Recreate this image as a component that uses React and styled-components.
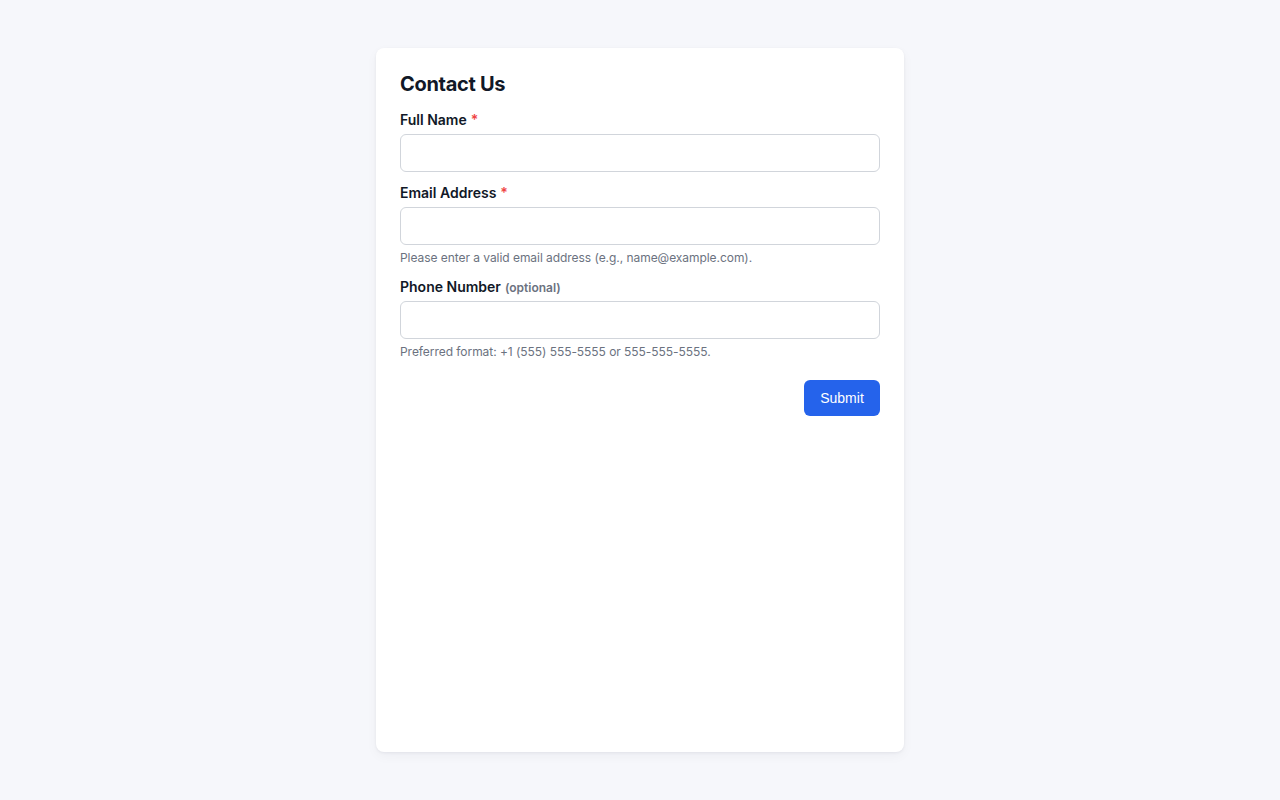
import React from 'react';
import styled, { createGlobalStyle } from 'styled-components';

const GlobalStyle = createGlobalStyle`
  html, body {
    margin: 0;
    padding: 0;
    background: #f6f7fb;
    font-family: Inter, "Noto Sans", "Liberation Sans", sans-serif;
    color: #111827;
  }
  * {
    box-sizing: border-box;
  }
`;

const Page = styled.div`
  min-height: 800px;
  display: flex;
  justify-content: center;
  padding: 48px 0;
`;

const Card = styled.form`
  width: 528px;
  height: 704px;
  background: #ffffff;
  border-radius: 8px;
  box-shadow: 0 1px 3px rgba(15, 23, 42, 0.06), 0 4px 12px rgba(15, 23, 42, 0.04);
  padding: 24px;
  display: flex;
  flex-direction: column;
`;

const Title = styled.h1`
  margin: 0 0 14px;
  font-size: 20px;
  line-height: 24px;
  font-weight: 700;
  letter-spacing: -0.3px;
  color: #111827;
`;

const Field = styled.div`
  display: flex;
  flex-direction: column;
  margin-bottom: 11px;
`;

const Label = styled.label`
  display: block;
  height: 20px;
  font-size: 14px;
  line-height: 20px;
  font-weight: 600;
  color: #111827;
  margin-bottom: 4px;
`;

const Required = styled.span`
  color: #ef4444;
  margin-left: 4px;
`;

const Optional = styled.span`
  color: #6b7280;
  font-size: 12px;
  line-height: 1;
  font-weight: 600;
  margin-left: 4px;
`;

const Input = styled.input`
  height: 38px;
  width: 100%;
  border: 1px solid #d1d5db;
  border-radius: 6px;
  padding: 0 12px;
  font-family: inherit;
  font-size: 14px;
  background: #fff;
  outline: none;
`;

const Hint = styled.p`
  margin: 5px 0 0;
  font-size: 12px;
  line-height: 16px;
  letter-spacing: -0.05px;
  color: #6b7280;
`;

const Actions = styled.div`
  display: flex;
  justify-content: flex-end;
  margin-top: 9px;
`;

const SubmitButton = styled.button`
  height: 36px;
  width: 76px;
  border: none;
  border-radius: 6px;
  background: #2563eb;
  color: #ffffff;
  font-family: "Liberation Sans", Arial, sans-serif;
  font-size: 14px;
  font-weight: 400;
  cursor: pointer;
`;

const App = () => (
  <>
    <GlobalStyle />
    <Page>
      <Card onSubmit={(e) => e.preventDefault()}>
        <Title>Contact Us</Title>
        <Field>
          <Label htmlFor="name">
            Full Name<Required>*</Required>
          </Label>
          <Input id="name" type="text" />
        </Field>
        <Field>
          <Label htmlFor="email">
            Email Address<Required>*</Required>
          </Label>
          <Input id="email" type="email" />
          <Hint>Please enter a valid email address (e.g., name@example.com).</Hint>
        </Field>
        <Field>
          <Label htmlFor="phone">
            Phone Number<Optional>(optional)</Optional>
          </Label>
          <Input id="phone" type="tel" />
          <Hint>Preferred format: +1 (555) 555-5555 or 555-555-5555.</Hint>
        </Field>
        <Actions>
          <SubmitButton type="submit">Submit</SubmitButton>
        </Actions>
      </Card>
    </Page>
  </>
);

export default App;
